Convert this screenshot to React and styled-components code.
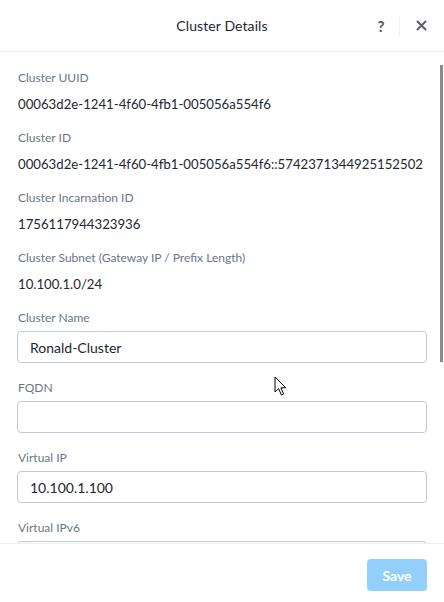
import React from "react";
import styled, { createGlobalStyle } from "styled-components";

const GlobalStyle = createGlobalStyle`
  html, body {
    margin: 0;
    padding: 0;
    background: #ffffff;
  }
  body {
    font-family: Lato, "Open Sans", sans-serif;
    -webkit-font-smoothing: antialiased;
  }
  * {
    box-sizing: border-box;
  }
`;

const Colors = {
  text: "#22272e",
  label: "#6a7686",
  icon: "#56616f",
  border: "#edeff2",
  input: "#c2c9d4",
  save: "#92cffa",
  scroll: "#8b8b8b",
};

const readOnlyFields = [
  { label: "Cluster UUID", value: "00063d2e-1241-4f60-4fb1-005056a554f6" },
  {
    label: "Cluster ID",
    value: "00063d2e-1241-4f60-4fb1-005056a554f6::5742371344925152502",
  },
  { label: "Cluster Incarnation ID", value: "1756117944323936" },
  {
    label: "Cluster Subnet (Gateway IP / Prefix Length)",
    value: "10.100.1.0/24",
  },
];

const inputFields = [
  { label: "Cluster Name", value: "Ronald-Cluster" },
  { label: "FQDN", value: "" },
  { label: "Virtual IP", value: "10.100.1.100" },
  { label: "Virtual IPv6", value: "" },
];

const ClusterDetails = () => {
  return (
    <Modal>
      <Header>
        <Title>Cluster Details</Title>
        <HeaderActions>
          <HelpButton>?</HelpButton>
          <Divider />
          <CloseButton aria-label="Close">
            <svg width="11" height="11" viewBox="0 0 11 11">
              <path
                d="M1.5 1.5 L9.5 9.5 M9.5 1.5 L1.5 9.5"
                stroke={Colors.icon}
                strokeWidth="2"
                strokeLinecap="round"
              />
            </svg>
          </CloseButton>
        </HeaderActions>
      </Header>

      <Body>
        {readOnlyFields.map((field) => (
          <Field key={field.label}>
            <Label>{field.label}</Label>
            <Value>{field.value}</Value>
          </Field>
        ))}
        {inputFields.map((field) => (
          <Field key={field.label} input>
            <Label>{field.label}</Label>
            <TextInput defaultValue={field.value} />
          </Field>
        ))}
        <ScrollThumb />
        <Cursor width="13" height="20" viewBox="0 0 13 20">
          <path
            d="M1 1 L1 16 L4.6 12.6 L7.4 19 L9.6 18 L6.9 11.8 L11.8 11.8 Z"
            fill="#ffffff"
            stroke="#000000"
            strokeWidth="1"
          />
        </Cursor>
      </Body>

      <Footer>
        <SaveButton disabled>Save</SaveButton>
      </Footer>
    </Modal>
  );
};

const Modal = styled("div")`
  width: 444px;
  height: 602px;
  display: flex;
  flex-direction: column;
  background: #ffffff;
  overflow: hidden;
`;

const Header = styled("header")`
  position: relative;
  flex: 0 0 52px;
  display: flex;
  align-items: center;
  justify-content: center;
  border-bottom: 1px solid ${Colors.border};
`;

const Title = styled("h1")`
  margin: 0;
  font-size: 14px;
  font-weight: 400;
  color: ${Colors.text};
  letter-spacing: 0.1px;
`;

const HeaderActions = styled("div")`
  position: absolute;
  right: 17px;
  top: 0;
  bottom: 0;
  display: flex;
  align-items: center;
`;

const HelpButton = styled("button")`
  border: none;
  background: none;
  padding: 0;
  width: 12px;
  font: inherit;
  font-size: 15px;
  font-weight: 900;
  color: ${Colors.icon};
  margin-right: 12px;
  cursor: pointer;
`;

const Divider = styled("span")`
  width: 1px;
  height: 22px;
  background: ${Colors.border};
  margin-right: 16px;
`;

const CloseButton = styled("button")`
  border: none;
  background: none;
  padding: 0;
  display: flex;
  cursor: pointer;
`;

const Body = styled("div")`
  position: relative;
  flex: 1;
  overflow: hidden;
  padding: 18px 17px 0 17px;
`;

const ScrollThumb = styled("div")`
  position: absolute;
  top: 13px;
  right: 1px;
  width: 3px;
  height: 297px;
  background: ${Colors.scroll};
`;

const Field = styled("div")`
  display: flex;
  flex-direction: column;
  gap: ${(props) => (props.input ? "5px" : "8px")};
  margin-bottom: ${(props) => (props.input ? "17px" : "16px")};
`;

const Label = styled("label")`
  display: block;
  font-size: 12px;
  line-height: 16px;
  color: ${Colors.label};
  padding-left: 1px;
`;

const Value = styled("div")`
  font-size: 13.2px;
  line-height: 20px;
  color: ${Colors.text};
  padding-left: 1px;
  white-space: nowrap;
`;

const TextInput = styled("input")`
  width: 100%;
  height: 32px;
  border: 1px solid ${Colors.input};
  border-radius: 4px;
  padding: 0 12px;
  font-family: inherit;
  font-size: 14px;
  color: ${Colors.text};
  outline: none;
`;

const Cursor = styled("svg")`
  position: absolute;
  left: 274px;
  top: 324px;
  pointer-events: none;
`;

const Footer = styled("footer")`
  flex: 0 0 59px;
  display: flex;
  justify-content: flex-end;
  align-items: flex-start;
  padding: 15px 17px 0 0;
  border-top: 1px solid ${Colors.border};
`;

const SaveButton = styled("button")`
  width: 60px;
  height: 32px;
  border: none;
  border-radius: 4px;
  background: ${Colors.save};
  color: #ffffff;
  font-family: inherit;
  font-size: 14px;
  font-weight: 700;
`;

const App = () => (
  <React.Fragment>
    <GlobalStyle />
    <ClusterDetails />
  </React.Fragment>
);

export default App;
